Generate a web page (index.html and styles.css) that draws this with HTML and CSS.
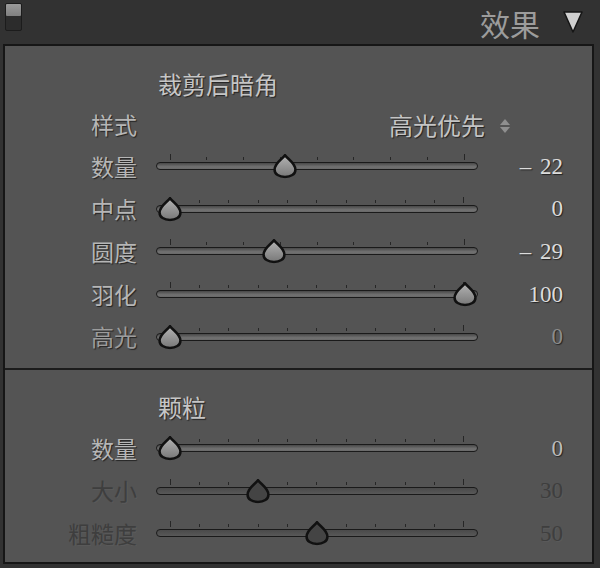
FILE: index.html
```html
<!DOCTYPE html>
<html lang="zh-CN">
<head>
    <meta charset="UTF-8">
    <meta name="viewport" content="width=device-width, initial-scale=1.0">
    <title>效果</title>
    <link rel="stylesheet" href="styles.css">
</head>
<body>
    <header class="panel-header">
        <div class="toggle"><span class="toggle-on"></span></div>
        <div class="header-right">
            <h1>效果</h1>
            <svg class="collapse" width="22" height="24" viewBox="0 0 22 24">
                <path d="M2 2 L20 2 L11 22 Z" fill="#cfcfcf" stroke="#151515" stroke-width="1.5" stroke-linejoin="round"/>
            </svg>
        </div>
    </header>

    <main class="panel">
        <section class="group">
            <div class="row title-row"><h2>裁剪后暗角</h2></div>

            <div class="row select-row">
                <span class="label">样式</span>
                <div class="select">
                    <span>高光优先</span>
                    <svg width="12" height="16" viewBox="0 0 12 16">
                        <path d="M6 1 L11 7 L1 7 Z" fill="#8f8f8f"/>
                        <path d="M1 9 L11 9 L6 15 Z" fill="#8f8f8f"/>
                    </svg>
                </div>
            </div>

            <div class="row">
                <span class="label">数量</span>
                <div class="slider">
                    <div class="ticks"><i></i><i></i><i></i><i></i><i></i><i></i><i></i><i></i><i></i></div>
                    <div class="track"><span class="thumb" style="--v:0.39"></span></div>
                </div>
                <span class="value">– 22</span>
            </div>

            <div class="row">
                <span class="label">中点</span>
                <div class="slider">
                    <div class="ticks"><i></i><i></i><i></i><i></i><i></i><i></i><i></i><i></i><i></i><i></i><i></i></div>
                    <div class="track"><span class="thumb" style="--v:0"></span></div>
                </div>
                <span class="value">0</span>
            </div>

            <div class="row">
                <span class="label">圆度</span>
                <div class="slider">
                    <div class="ticks"><i></i><i></i><i></i><i></i><i></i><i></i><i></i><i></i><i></i></div>
                    <div class="track"><span class="thumb" style="--v:0.355"></span></div>
                </div>
                <span class="value">– 29</span>
            </div>

            <div class="row">
                <span class="label">羽化</span>
                <div class="slider">
                    <div class="ticks"><i></i><i></i><i></i><i></i><i></i><i></i><i></i><i></i><i></i><i></i><i></i></div>
                    <div class="track"><span class="thumb" style="--v:1"></span></div>
                </div>
                <span class="value">100</span>
            </div>

            <div class="row dim">
                <span class="label">高光</span>
                <div class="slider">
                    <div class="ticks"><i></i><i></i><i></i><i></i><i></i><i></i><i></i><i></i><i></i><i></i><i></i></div>
                    <div class="track"><span class="thumb" style="--v:0"></span></div>
                </div>
                <span class="value">0</span>
            </div>
        </section>

        <section class="group grain">
            <div class="row title-row"><h2>颗粒</h2></div>

            <div class="row">
                <span class="label">数量</span>
                <div class="slider">
                    <div class="ticks"><i></i><i></i><i></i><i></i><i></i><i></i><i></i><i></i><i></i><i></i><i></i></div>
                    <div class="track"><span class="thumb" style="--v:0"></span></div>
                </div>
                <span class="value">0</span>
            </div>

            <div class="row disabled">
                <span class="label">大小</span>
                <div class="slider">
                    <div class="ticks"><i></i><i></i><i></i><i></i><i></i><i></i><i></i><i></i><i></i><i></i><i></i></div>
                    <div class="track"><span class="thumb" style="--v:0.3"></span></div>
                </div>
                <span class="value">30</span>
            </div>

            <div class="row disabled">
                <span class="label">粗糙度</span>
                <div class="slider">
                    <div class="ticks"><i></i><i></i><i></i><i></i><i></i><i></i><i></i><i></i><i></i><i></i><i></i></div>
                    <div class="track"><span class="thumb" style="--v:0.5"></span></div>
                </div>
                <span class="value">50</span>
            </div>
        </section>
    </main>
</body>
</html>
```

FILE: styles.css
```css
:root {
    --bar: #323232;
    --panel: #545454;
    --line: #161616;
    --text: #b6b6b6;
    --bright: #dcdcdc;
    --off: #3e3e3e;
}

* {
    box-sizing: border-box;
    margin: 0;
    padding: 0;
}

body {
    background-color: var(--bar);
    font-family: "Noto Sans CJK SC", "Noto Sans", sans-serif;
    color: var(--text);
    width: 600px;
    height: 568px;
    overflow: hidden;
}

/* Header bar */
.panel-header {
    height: 44px;
    display: flex;
    justify-content: space-between;
    align-items: flex-start;
    padding: 3px 16px 0 5px;
}

.toggle {
    width: 17px;
    height: 28px;
    background: #2c2c2c;
    border: 1px solid #1c1c1c;
    border-radius: 2px;
    display: flex;
    flex-direction: column;
}

.toggle-on {
    height: 12px;
    background: linear-gradient(#9a9a9a, #808080);
    border-radius: 1px;
}

.header-right {
    display: flex;
    align-items: center;
    gap: 22px;
    height: 42px;
    margin-top: -1px;
}

.panel-header h1 {
    font-size: 30px;
    font-weight: 400;
    color: #9c9c9c;
    line-height: 1;
}

.collapse {
    margin-top: -2px;
}

/* Panel */
.panel {
    margin: 0 6px 0 3px;
    background: var(--panel);
    border: 2px solid var(--line);
}

.group {
    padding: 18px 0 10px;
}

.group.grain {
    border-top: 2px solid #1c1c1c;
    padding: 17px 0 7px;
}

.row {
    display: grid;
    grid-template-columns: 151px 322px 85px;
    align-items: center;
    height: 42.6px;
    text-shadow: 1px 1px 1px rgba(0, 0, 0, 0.6);
}

.title-row {
    height: 40px;
}

.select-row {
    height: 41px;
}

.title-row h2 {
    grid-column: 2 / 4;
    padding-left: 2px;
    font-size: 24px;
    font-weight: 400;
    color: #c6c6c6;
    line-height: 1;
}

.label {
    text-align: right;
    padding-right: 19px;
    font-size: 23px;
    line-height: 1;
}

.value {
    text-align: right;
    font-family: "Liberation Serif", serif;
    font-size: 23px;
    word-spacing: 3px;
    color: var(--bright);
    line-height: 1;
}

.select {
    grid-column: 2 / 4;
    justify-self: end;
    display: flex;
    align-items: center;
    gap: 14px;
    padding-right: 52px;
    font-size: 24px;
    color: #c4c4c4;
    line-height: 1;
}

.select svg {
    margin-top: 2px;
}

/* Sliders */
.slider {
    height: 100%;
    display: flex;
    flex-direction: column;
    justify-content: center;
    padding-bottom: 8px;
}

.ticks {
    display: flex;
    justify-content: space-between;
    align-items: flex-end;
    height: 6px;
    margin: 0 13.5px 2px;
}

.ticks i {
    width: 1px;
    height: 3px;
    background: #262626;
}

.ticks i:first-child,
.ticks i:last-child {
    height: 6px;
}

.track {
    position: relative;
    height: 8px;
    border: 1.5px solid #1a1a1a;
    border-radius: 4px;
    background: linear-gradient(#484848, #727272 65%, #686868);
}

.thumb {
    position: absolute;
    top: 50%;
    left: calc(12.5px + (100% - 25px) * var(--v));
    width: 25px;
    height: 25px;
    transform: translate(-50%, -50%);
    background: url("data:image/svg+xml,%3Csvg xmlns='http://www.w3.org/2000/svg' viewBox='0 0 24 24'%3E%3Cdefs%3E%3ClinearGradient id='g' x1='0' y1='0' x2='0' y2='1'%3E%3Cstop offset='0' stop-color='%23b4b4b4'/%3E%3Cstop offset='1' stop-color='%23787878'/%3E%3C/linearGradient%3E%3C/defs%3E%3Cpath d='M12 1.5 C14.5 5.5 22 9 22 15.5 C22 20 17.5 22.5 12 22.5 C6.5 22.5 2 20 2 15.5 C2 9 9.5 5.5 12 1.5 Z' fill='url(%23g)' stroke='%23111' stroke-width='2.4' stroke-linejoin='round'/%3E%3C/svg%3E") no-repeat center / 25px 25px;
}

/* States */
.row.dim .label {
    color: #9c9c9c;
}

.row.dim .value {
    color: #8c8c8c;
}

.grain .row .value {
    color: #bcbcbc;
}

.row.disabled {
    text-shadow: 1px 1px 0 rgba(255, 255, 255, 0.05);
}

.row.disabled .label,
.grain .row.disabled .value {
    color: var(--off);
}

.row.disabled .track {
    background: linear-gradient(#4a4a4a, #585858);
}

.row.disabled .thumb {
    background: url("data:image/svg+xml,%3Csvg xmlns='http://www.w3.org/2000/svg' viewBox='0 0 24 24'%3E%3Cpath d='M12 1.5 C14.5 5.5 22 9 22 15.5 C22 20 17.5 22.5 12 22.5 C6.5 22.5 2 20 2 15.5 C2 9 9.5 5.5 12 1.5 Z' fill='%23444' stroke='%23111' stroke-width='2.4' stroke-linejoin='round'/%3E%3C/svg%3E") no-repeat center / 25px 25px;
}
```
